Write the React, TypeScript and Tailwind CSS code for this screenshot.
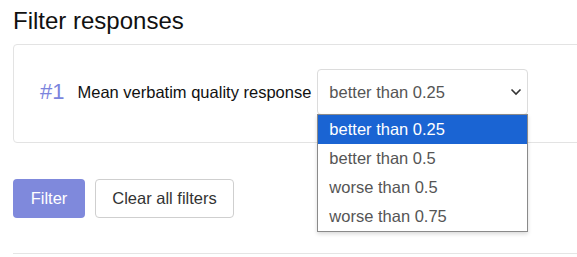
import React from 'react';

const options = ['better than 0.25', 'better than 0.5', 'worse than 0.5', 'worse than 0.75'];

export default function App() {
  return (
    <div className="w-[577px] h-[257px] overflow-hidden bg-white pl-[13px] font-['Liberation_Sans',Arial,sans-serif]">
      <h2 className="pt-[6px] text-[24px] leading-[30px] text-[#111]">Filter responses</h2>

      {/* Filter card */}
      <div className="mt-[8px] h-[99px] w-[620px] rounded-[4px] border border-[#e3e3e3] pl-[26px] pt-[24px]">
        <div className="flex h-[46px] items-center">
          <span className="text-[22px] leading-none text-[#7b84dd]">#1</span>
          <span className="ml-[13px] text-[16.5px] text-[#111]">Mean verbatim quality response</span>

          {/* Select, shown open */}
          <div className="relative ml-[6px] flex h-[46px] w-[211px] items-center justify-between rounded-[4px] border border-[#dcdcdc] pl-[11px] pr-[5px]">
            <span className="text-[16.5px] text-[#555]">better than 0.25</span>
            <svg width="12" height="8" viewBox="0 0 12 8" fill="none">
              <path d="M1.5 1.5l4.5 4.5 4.5-4.5" stroke="#333" strokeWidth="1.6" />
            </svg>

            <div className="absolute left-[-1px] top-full z-10 w-[211px] border border-[#8a8a8a] bg-white shadow-[0_2px_4px_rgba(0,0,0,0.15)]">
              {options.map((opt, i) => (
                <div
                  key={opt}
                  className={
                    i === 0
                      ? 'flex h-[29px] items-center bg-[#1a64d3] pl-[11px] text-[16.5px] text-white'
                      : 'flex h-[29px] items-center pl-[11px] text-[16.5px] text-[#555]'
                  }
                >
                  {opt}
                </div>
              ))}
            </div>
          </div>
        </div>
      </div>

      {/* Actions */}
      <div className="mt-[36px] flex gap-[10px]">
        <button className="h-[39px] w-[72px] rounded-[4px] bg-[#7f89dc] text-[16.5px] text-white">Filter</button>
        <button className="h-[39px] w-[139px] rounded-[4px] border border-[#cfcfcf] bg-white text-[16.5px] text-[#333]">
          Clear all filters
        </button>
      </div>

      <div className="mt-[35px] h-px w-[600px] bg-[#e5e5e5]" />
    </div>
  );
}
